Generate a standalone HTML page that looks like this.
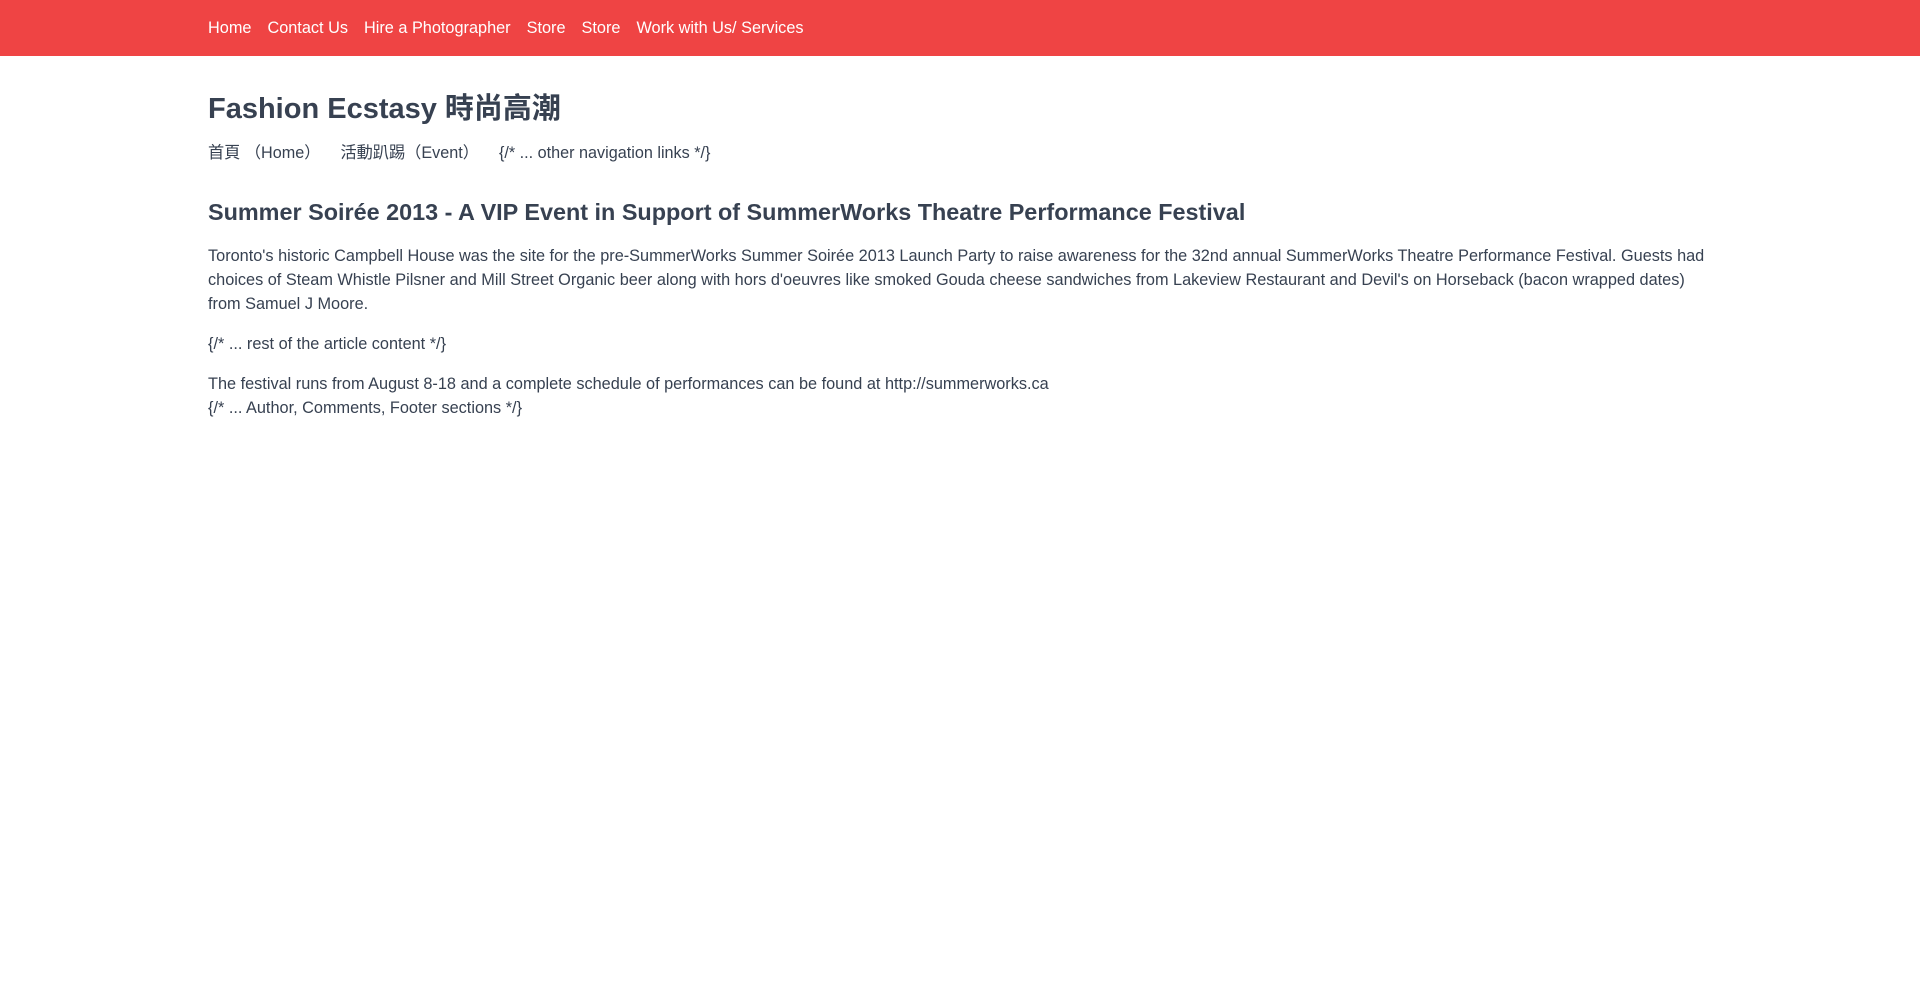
<!DOCTYPE html>
<html><head><meta charset="utf-8"><style>
body{margin:0;font-family:"Liberation Sans","Noto Sans CJK TC",sans-serif;color:#374151;background:#fff;}
nav{background:#ef4444;height:56px;}
nav .in{padding-left:208px;display:flex;gap:16px;align-items:center;height:56px;padding-top:1px;box-sizing:border-box;}
nav a{color:#fff;font-size:16.3px;text-decoration:none;}
.c{padding-left:208px;width:1504px;}
h1{font-size:29px;font-weight:bold;margin:0;position:absolute;top:85px;}
.bc{position:absolute;top:139px;font-size:16.2px;}
.bc span{margin-right:20px;}
h2{position:absolute;top:199px;margin:0;font-size:23.4px;}
.art{position:absolute;top:244px;width:1504px;font-size:16.3px;line-height:24px;}
.art p{margin:0 0 16px;}
</style></head><body>
<nav><div class="in"><a>Home</a><a>Contact Us</a><a>Hire a Photographer</a><a>Store</a><a>Store</a><a>Work with Us/ Services</a></div></nav>
<div class="c">
<h1>Fashion Ecstasy 時尚高潮</h1>
<div class="bc"><span>首頁 （Home）</span><span>活動趴踢（Event）</span><span>{/* ... other navigation links */}</span></div>
<h2>Summer Soirée 2013 - A VIP Event in Support of SummerWorks Theatre Performance Festival</h2>
<div class="art">
<p>Toronto's historic Campbell House was the site for the pre-SummerWorks Summer Soirée 2013 Launch Party to raise awareness for the 32nd annual SummerWorks Theatre Performance Festival. Guests had choices of Steam Whistle Pilsner and Mill Street Organic beer along with hors d'oeuvres like smoked Gouda cheese sandwiches from Lakeview Restaurant and Devil's on Horseback (bacon wrapped dates) from Samuel J Moore.</p>
<p>{/* ... rest of the article content */}</p>
<p style="margin:0">The festival runs from August 8-18 and a complete schedule of performances can be found at http://summerworks.ca</p>
<div>{/* ... Author, Comments, Footer sections */}</div>
</div>
</div>
</body></html>
